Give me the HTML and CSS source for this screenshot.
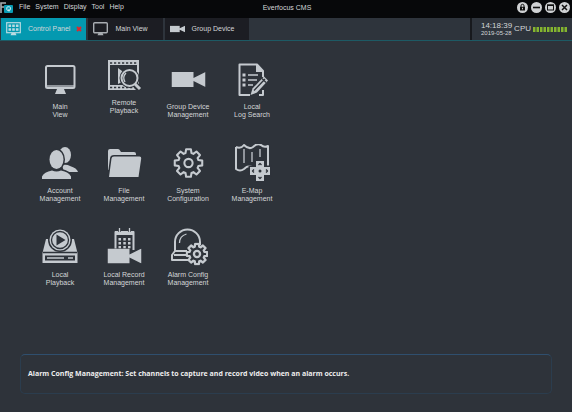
FILE: index.html
```html
<!DOCTYPE html>
<html lang="en">

<head>
    <meta charset="UTF-8">
    <meta name="viewport" content="width=device-width, initial-scale=1.0">
    <title>Everfocus CMS</title>
    <link rel="stylesheet" href="styles.css">
</head>

<body>
    <!-- Shared shapes -->
    <svg class="defs" aria-hidden="true">
        <symbol id="gear" viewBox="-15 -15 30 30">
            <path d="M9.6-2.9 13.3-2.3V2.3L9.6 2.9 8.8 4.7 11.1 7.7 7.7 11.1 4.7 8.8 2.9 9.6 2.3 13.3H-2.3L-2.9 9.6-4.7 8.8-7.7 11.1-11.1 7.7-8.8 4.7-9.6 2.9-13.3 2.3V-2.3L-9.6-2.9-8.8-4.7-11.1-7.7-7.7-11.1-4.7-8.8-2.9-9.6-2.3-13.3H2.3L2.9-9.6 4.7-8.8 7.7-11.1 11.1-7.7 8.8-4.7Z"/>
            <circle r="4"/>
        </symbol>
        <symbol id="camera" viewBox="0 0 34 15">
            <path d="M0 0H22V6L34 0V15L22 9V15H0Z"/>
        </symbol>
    </svg>

    <header class="title-bar">
        <div class="title-left">
            <svg class="logo" viewBox="0 0 14 12" aria-hidden="true">
                <path d="M6 1H1V11M1 5H4" fill="none" stroke="#a9adb0" stroke-width="1.6"/>
                <rect x="4" y="3" width="9" height="8" rx="1" fill="#0a9cb4"/>
                <rect x="6.8" y="4.8" width="3.6" height="3.6" rx="1" fill="none" stroke="#d5eef2"/>
                <path d="M9 7v2.5" stroke="#d5eef2"/>
            </svg>
            <nav class="menu">
                <button>File</button>
                <button>System</button>
                <button>Display</button>
                <button>Tool</button>
                <button>Help</button>
            </nav>
        </div>
        <h1>Everfocus CMS</h1>
        <div class="window-buttons">
            <button aria-label="Lock">
                <svg viewBox="0 0 11 11"><path d="M4 5V3.8a1.5 1.5 0 0 1 3 0V5" fill="none" stroke="#111"/><rect x="3" y="4.8" width="5" height="3.7" fill="#111"/><path d="M5.5 5.8v1.5" stroke="#ccc"/></svg>
            </button>
            <button aria-label="Minimize">
                <svg viewBox="0 0 11 11"><path d="M2 5.5h7" stroke="#111" stroke-width="1.6"/></svg>
            </button>
            <button aria-label="Maximize">
                <svg viewBox="0 0 11 11"><rect x="2.5" y="3" width="6" height="5" fill="none" stroke="#111"/><path d="M2 3.3h7" stroke="#111" stroke-width="1.4"/></svg>
            </button>
            <button aria-label="Close">
                <svg viewBox="0 0 11 11"><path d="M3 3l5 5M8 3l-5 5" stroke="#111" stroke-width="1.5"/></svg>
            </button>
        </div>
    </header>

    <div class="tab-bar">
        <div class="tab active">
            <button class="tab-btn">
                <svg class="tab-icon" viewBox="0 0 15 14">
                    <rect x="0.7" y="0.7" width="13.6" height="10" fill="none" stroke="#b9dbe2" stroke-width="1.2"/>
                    <path d="M2.5 2.5h2.6v2.6H2.5zM6.2 2.5h2.6v2.6H6.2zM9.9 2.5h2.6v2.6H9.9zM2.5 6.2h2.6v2.6H2.5zM6.2 6.2h2.6v2.6H6.2zM9.9 6.2h2.6v2.6H9.9zM5.5 11h4l1 2.2h-6z" fill="#b9dbe2"/>
                </svg>
                Control Panel
            </button>
            <button class="tab-close" aria-label="Close tab">
                <svg viewBox="0 0 6 6"><path d="M1 1l4 4M5 1L1 5" stroke="#e0262c" stroke-width="1.8"/></svg>
            </button>
        </div>
        <div class="tab">
            <button class="tab-btn">
                <svg class="tab-icon" viewBox="0 0 15 14">
                    <rect x="0.7" y="0.7" width="13.6" height="10" rx="1" fill="none" stroke="#a9adb2" stroke-width="1.4"/>
                    <path d="M5.5 11h4l1 2.2h-6z" fill="#a9adb2"/>
                </svg>
                Main View
            </button>
        </div>
        <div class="tab">
            <button class="tab-btn">
                <svg class="tab-icon" viewBox="0 0 15 14"><use href="#camera" y="3.5" width="15" height="7" fill="#c5cacf"/></svg>
                Group Device
            </button>
        </div>
        <div class="status">
            <div class="clock">
                <div class="time">14:18:39</div>
                <div class="date">2019-05-28</div>
            </div>
            <span class="cpu-label">CPU</span>
            <svg class="cpu-meter" viewBox="0 0 34 5" aria-hidden="true">
                <path d="M0 2.5H34" stroke="#84b52f" stroke-width="5" stroke-dasharray="2.5 1"/>
            </svg>
        </div>
    </div>

    <main class="panel">
        <button class="item">
            <svg class="icon" viewBox="0 0 40 40">
                <rect class="line" x="6" y="6" width="28.5" height="22" rx="1.5"/>
                <path class="thin" d="M7 26h27"/>
                <path d="M17 29h7l2 5H15z"/>
            </svg>
            Main<br>View
        </button>
        <button class="item">
            <svg class="icon short" viewBox="0 0 40 36">
                <path d="M4 0H35V30H4ZM6 5V25H33V5Z" fill-rule="evenodd"/>
                <path class="dark" d="M6 3H34M6 27.5H34" stroke-dasharray="2.2 1.8"/>
                <path d="M14 8l8 6v6l-8 4z"/>
                <circle cx="25.5" cy="18" r="10" fill="#2e333a"/>
                <path class="dark wide" d="M30 23l6 7"/>
                <circle class="line" cx="25.5" cy="18" r="8"/>
                <path d="M22 13q-4 4-1 9" class="thin"/>
                <path class="line heavy" d="M31 24l5 5"/>
            </svg>
            Remote<br>Playback
        </button>
        <button class="item">
            <svg class="icon" viewBox="0 0 40 40"><use href="#camera" x="3.5" y="12" width="34" height="15"/></svg>
            Group Device<br>Management
        </button>
        <button class="item">
            <svg class="icon" viewBox="0 0 40 40">
                <path class="line" d="M31 17V11L25 4.5H7.5V35H18M27 35h4v-5"/>
                <path d="M24 4v8h8z"/>
                <path d="M10.5 13.5h3v3h-3zM10.5 18.5h3v3h-3zM10.5 23.5h3v3h-3z"/>
                <path class="thin" d="M16 15h10M16 20h9M16 25h5"/>
                <path d="M18.5 35l2-6.5L32 16.5l4 4L25 32.5z"/>
                <path class="dark" d="M22 30.5L33 19M30 18.5l4 4"/>
            </svg>
            Local<br>Log Search
        </button>

        <button class="item">
            <svg class="icon" viewBox="0 0 40 40">
                <ellipse cx="25" cy="11" rx="6" ry="8"/>
                <path d="M22 21q5-1 8 1 7 2 8 6H24z"/>
                <ellipse class="cut" cx="16.5" cy="15.5" rx="7" ry="9.5"/>
                <path class="cut" d="M2 35v-2.5q2-4.5 10-6 4.500 2 9 0 8 1.500 10 6V35z"/>
            </svg>
            Account<br>Management
        </button>
        <button class="item">
            <svg class="icon" viewBox="0 0 40 40">
                <path d="M4 26V7q0-2 2-2h8q1.500 0 2 1.500L17 8h13q2 0 2 2v10z"/>
                <path class="cut" d="M5 33L7.500 14.500q.3-2 2.500-2h25.500q2 0 1.700 2L34.500 33z"/>
            </svg>
            File<br>Management
        </button>
        <button class="item">
            <svg class="icon" viewBox="0 0 40 40"><use class="line" href="#gear" x="5" y="3.5" width="31" height="31"/></svg>
            System<br>Configuration
        </button>
        <button class="item">
            <svg class="icon" viewBox="0 0 40 40">
                <path class="line" d="M4 3q5 2 8-2 5 5 9 2 4-4 8-2 3 3 7 1v20M20 23q-4-2-8 2-4 3-8 0V3"/>
                <path class="thin" d="M12 5v14M20 8v10M28 5v8"/>
                <path class="cut" d="M24 17h8v6h6v8h-6v6h-8v-6h-6v-8h6z"/>
                <circle cx="28" cy="27" r="1.5" fill="#2e333a"/>
                <path class="dark" d="M26.500 21l1.500-1.500 1.500 1.500M26.500 33l1.500 1.500 1.500-1.500M22 25.500L20.500 27l1.500 1.500M34 25.500l1.500 1.500-1.500 1.500"/>
            </svg>
            E-Map<br>Management
        </button>

        <button class="item">
            <svg class="icon" viewBox="0 0 40 40">
                <path d="M6 11h28l3.500 14v10h-35V25z"/>
                <path class="dark" d="M3 24.500h34"/>
                <path d="M5 27.500h30v5H5z" fill="#2e333a"/>
                <path class="thin" d="M7 30h17M28 30h5"/>
                <circle class="cut" cx="20" cy="12" r="10.5"/>
                <circle class="dark" cx="20" cy="12" r="8.5"/>
                <path d="M16.500 6.500v11l9-5.500z" fill="#2e333a"/>
            </svg>
            Local<br>Playback
        </button>
        <button class="item">
            <svg class="icon" viewBox="0 0 40 40">
                <path class="line" d="M11.500 22V4h18v18"/>
                <path d="M11 3h19v4H11z"/>
                <path class="dark" d="M14 3h3M24 3h3"/>
                <path class="thin" d="M15.500 0v5M25.500 0v5"/>
                <path d="M14.500 10H17v2.500h-2.500zM19.300 10h2.500v2.500h-2.500zM24 10h2.500v2.500H24zM14.500 14H17v2.500h-2.500zM19.300 14h2.500v2.500h-2.500zM24 14h2.500v2.500H24zM14.500 18H17v2.500h-2.500zM19.300 18h2.500v2.500h-2.500zM24 18h2.500v2.500H24z"/>
                <use class="cut" href="#camera" x="3.5" y="20.5" width="34" height="15"/>
            </svg>
            Local Record<br>Management
        </button>
        <button class="item">
            <svg class="icon" viewBox="0 0 40 40">
                <path class="line" d="M7 23V14a12.500 12.500 0 0 1 25 0v3M7 23l-3 4v5h16M6 27h13M7 23h12"/>
                <path class="thin" d="M11.500 15q0-7 7-9"/>
                <circle cx="29" cy="26" r="9" fill="#2e333a"/>
                <use class="line heavy" href="#gear" x="17.5" y="14.5" width="23" height="23"/>
            </svg>
            Alarm Config<br>Management
        </button>
    </main>

    <footer class="hint">Alarm Config Management: Set channels to capture and record video when an alarm occurs.</footer>
</body>

</html>
```

FILE: styles.css
```css
/* Global Styles */
* {
    margin: 0;
    padding: 0;
    box-sizing: border-box;
}

body {
    display: flex;
    flex-direction: column;
    min-height: 100vh;
    background-color: #2e333a;
    color: #d4d6d8;
    font-family: "Liberation Sans", Arial, sans-serif;
    font-size: 7px;
    line-height: 8px;
}

button {
    border: none;
    background: none;
    color: inherit;
    font: inherit;
    cursor: pointer;
}

svg {
    display: block;
    flex: none;
}

.defs {
    position: absolute;
    width: 0;
    height: 0;
}

/* Title bar */
.title-bar {
    display: grid;
    grid-template-columns: 1fr auto 1fr;
    height: 18px;
    padding: 2px 2px 0 0;
    background-color: #07080a;
}

.title-left {
    display: flex;
    align-items: flex-start;
    gap: 5px;
}

.logo {
    width: 14px;
    height: 12px;
}

.menu {
    display: flex;
    gap: 5px;
    padding-top: 1px;
}

h1 {
    padding: 2px 0 0 4px;
    font-size: 7px;
    font-weight: normal;
}

.window-buttons {
    display: flex;
    justify-content: flex-end;
    gap: 3px;
}

.window-buttons button {
    width: 11px;
    height: 11px;
    border-radius: 50%;
    background-color: #cfd1d3;
}

/* Tabs */
.tab-bar {
    display: flex;
    height: 23px;
    padding-left: 1px;
    gap: 2px;
    background-color: #2e343c;
    border-bottom: 1px solid #1d5a64;
}

.tab {
    display: flex;
    align-items: center;
    padding: 0 15px 0 5px;
    background-color: #1c1d23;
}

.tab.active {
    padding-right: 4px;
    background-color: #0499b0;
}

.tab-btn {
    display: flex;
    align-items: center;
    gap: 7px;
}

.tab-icon {
    width: 15px;
    height: 14px;
}

.tab-close {
    margin-left: 6px;
}

.tab-close svg {
    width: 6px;
    height: 6px;
}

.status {
    display: flex;
    align-items: center;
    gap: 2px;
    margin-left: auto;
    padding: 0 5px 0 9px;
    border-left: 2px solid #17191d;
}

.time,
.cpu-label {
    font-size: 8px;
}

.time {
    line-height: 8px;
}

.date {
    font-size: 6px;
    line-height: 6px;
}

.cpu-meter {
    width: 34px;
    height: 5px;
}

/* Control panel */
.panel {
    display: grid;
    grid-template-columns: repeat(auto-fill, 64px);
    grid-template-rows: repeat(3, 59px);
    row-gap: 25px;
    flex: 1;
    max-width: 312px;
    padding: 19px 28px;
}

.item {
    display: flex;
    flex-direction: column;
    align-items: center;
    text-align: center;
    white-space: nowrap;
}

.icon {
    width: 40px;
    height: 40px;
    margin-bottom: 3px;
    fill: #c5cacf;
}

.icon.short {
    height: 36px;
}

.line,
.thin,
.dark {
    fill: none;
    stroke: #c5cacf;
    stroke-width: 2;
    stroke-linejoin: round;
}

.heavy {
    stroke-width: 3;
}

.thin {
    stroke-width: 1.3;
}

.dark {
    stroke: #2e333a;
    stroke-width: 1.3;
}

.wide {
    stroke-width: 6;
}

/* Dark outline that separates a shape from what lies behind it */
.cut {
    stroke: #2e333a;
    stroke-width: 3;
    paint-order: stroke;
}

/* Description box */
.hint {
    margin: 0 20px 18px;
    padding: 15px 7px;
    border: 1px solid #2b3d4e;
    border-top-color: #2f4f6e;
    border-radius: 5px;
    color: #eeeeee;
    font-family: "Open Sans", "Liberation Sans", sans-serif;
    font-weight: bold;
}
```
